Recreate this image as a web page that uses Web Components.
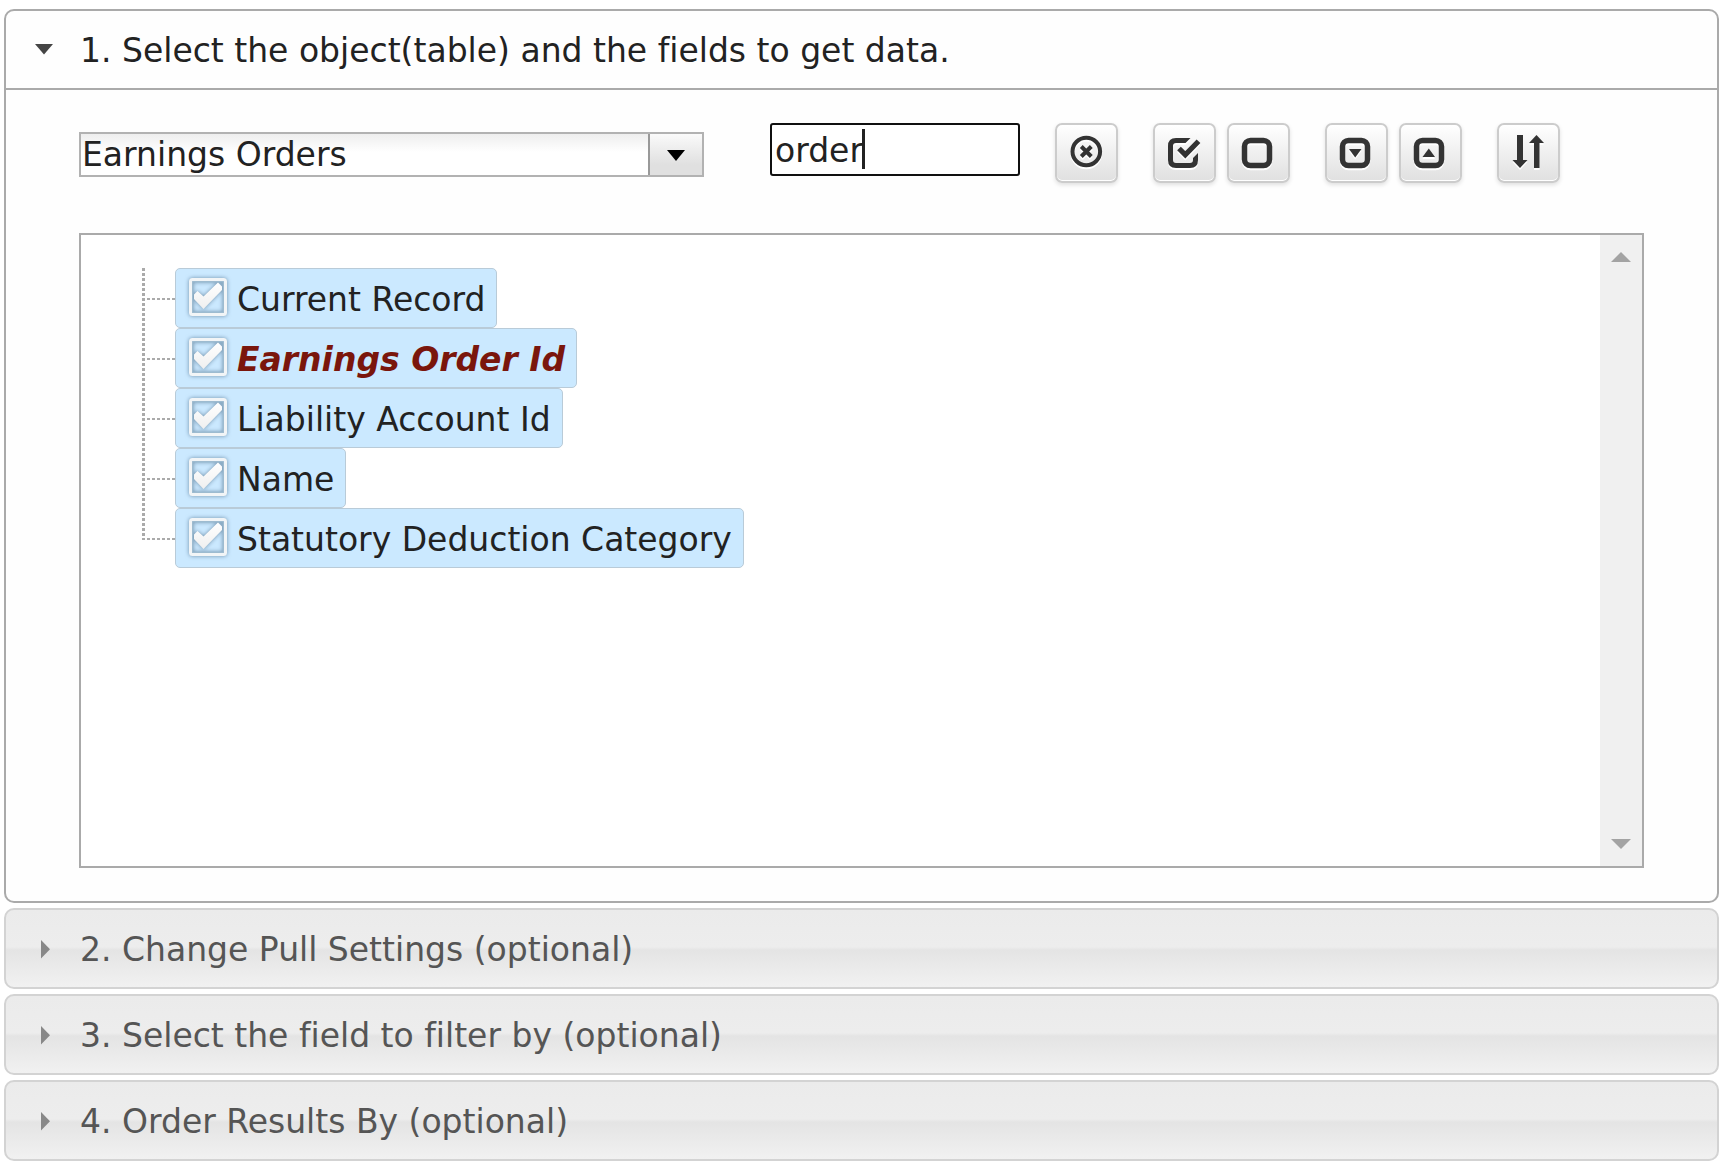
<!DOCTYPE html>
<html lang="en">
<head>
<meta charset="utf-8">
<title>Pull data</title>
<style>
  body {
    margin: 0;
    padding: 9px 6px 4px 4px;
    background: #fff;
    color: #222;
    font: 33px/40px Verdana, "DejaVu Sans", sans-serif;
    font-variant-ligatures: none;
  }
</style>
</head>
<body>
<pull-wizard>
  <wizard-section open>
    <span slot="title">1. Select the object(table) and the fields to get data.</span>
    <tool-row>
      <object-picker></object-picker>
      <field-search></field-search>
      <button-group>
        <icon-button icon="clear" label="Clear search"></icon-button>
      </button-group>
      <button-group>
        <icon-button icon="check" label="Select all"></icon-button>
        <icon-button icon="uncheck" label="Select none"></icon-button>
      </button-group>
      <button-group>
        <icon-button icon="expand" label="Expand all"></icon-button>
        <icon-button icon="collapse" label="Collapse all"></icon-button>
      </button-group>
      <button-group>
        <icon-button icon="sort" label="Sort"></icon-button>
      </button-group>
    </tool-row>
    <field-tree>
      <field-item>Current Record</field-item>
      <field-item key-field>Earnings Order Id</field-item>
      <field-item>Liability Account Id</field-item>
      <field-item>Name</field-item>
      <field-item>Statutory Deduction Category</field-item>
    </field-tree>
  </wizard-section>
  <wizard-section><span slot="title">2. Change Pull Settings (optional)</span></wizard-section>
  <wizard-section><span slot="title">3. Select the field to filter by (optional)</span></wizard-section>
  <wizard-section><span slot="title">4. Order Results By (optional)</span></wizard-section>
</pull-wizard>

<script>
const RESET = `<style>
  *, :host { box-sizing: border-box; }
  button, input, select { margin: 0; font: inherit; color: inherit; }
  svg { display: block; }
</style>`;

class BaseElement extends HTMLElement {
  connectedCallback() {
    if (this.shadowRoot) return;
    this.attachShadow({ mode: "open" }).innerHTML = RESET + this.render();
    this.ready();
  }
  ready() {}
}

customElements.define("pull-wizard", class extends BaseElement {
  render() {
    return `<style>:host { display: flex; flex-direction: column; gap: 5px; }</style><slot></slot>`;
  }
});

customElements.define("wizard-section", class extends BaseElement {
  render() {
    return `<style>
      :host { display: block; }
      .head {
        display: flex; align-items: center; gap: 25px;
        width: 100%; height: 81px; padding: 2px 27px 0;
        border: 2px solid #d3d3d3; border-radius: 10px;
        background: linear-gradient(#ebebeb 0, #ededed 48%, #e4e4e4 52%, #f1f1f1 100%);
        color: #555; text-align: left; font-variant-ligatures: none;
      }
      .head svg { width: 22px; height: 22px; flex: none; fill: #888; }
      .body { display: none; }
      :host([open]) .head {
        border-color: #aaa; border-radius: 10px 10px 0 0;
        background: #fefefe; color: #222;
      }
      :host([open]) .head svg { fill: #454545; }
      :host([open]) .right, :host(:not([open])) .down { display: none; }
      :host([open]) .body {
        display: flex; flex-direction: column; gap: 50px;
        padding: 33px 73px;
        border: 2px solid #aaa; border-top: 0; border-radius: 0 0 10px 10px;
        background: #fefefe;
      }
    </style>
    <button class="head" type="button" aria-expanded="${this.hasAttribute("open")}">
      <svg viewBox="0 0 22 22" aria-hidden="true">
        <path class="down" d="M2 4H20L11 14.500Z"/>
        <path class="right" d="M8 1V19.500L17 10.200Z"/>
      </svg>
      <slot name="title"></slot>
    </button>
    <div class="body"><slot></slot></div>`;
  }
  ready() {
    const head = this.shadowRoot.querySelector(".head");
    head.addEventListener("click", () => {
      this.toggleAttribute("open");
      head.setAttribute("aria-expanded", this.hasAttribute("open"));
    });
  }
});

customElements.define("tool-row", class extends BaseElement {
  render() {
    return `<style>:host { display: flex; align-items: flex-start; gap: 35px; }</style><slot></slot>`;
  }
});

customElements.define("object-picker", class extends BaseElement {
  render() {
    return `<style>
      :host { display: block; flex: 0 1 625px; margin: 9px 31px 0 0; }
      .box {
        display: grid; grid-template-columns: 1fr 54px;
        height: 45px; border: 2px solid #b2b2b2;
        background: linear-gradient(#eee, #fff 18px);
      }
      select {
        grid-area: 1 / 1 / 2 / 3; appearance: none; width: 100%;
        padding: 1px 56px 0 1px; border: 0; outline: 0; background: transparent;
      }
      .arrow {
        grid-area: 1 / 2; display: grid; place-items: center; pointer-events: none;
        border-left: 2px solid #999; background: linear-gradient(#fafafa, #e0e0e0 75%);
      }
    </style>
    <div class="box">
      <span class="arrow"><svg width="18" height="12" viewBox="0 0 18 12"><path d="M0 1H18L9 12Z"/></svg></span>
      <select aria-label="Object"><option>Earnings Orders</option></select>
    </div>`;
  }
});

customElements.define("field-search", class extends BaseElement {
  render() {
    return `<style>
      :host { display: block; position: relative; flex: 0 1 250px; }
      input {
        display: block; width: 100%; height: 53px; padding: 1px 3px 0;
        border: 2px solid #101010; border-radius: 3px; outline: 0; background: #fff;
        caret-color: transparent;
      }
      .caret { position: absolute; left: 92px; top: 6px; width: 3px; height: 40px; background: #222; }
    </style>
    <input type="text" value="order" aria-label="Find a field"><span class="caret"></span>`;
  }
});

customElements.define("button-group", class extends BaseElement {
  render() {
    return `<style>:host { display: flex; gap: 11px; }</style><slot></slot>`;
  }
});

const BOX = `<rect x="17.500" y="17.500" width="25" height="25" rx="6" fill="none" stroke="#333" stroke-width="5.500"/>`;
const ICONS = {
  clear: `<circle cx="31.300" cy="28.500" r="13.800" fill="none" stroke="#333" stroke-width="4"/>
    <path d="M26.300 23.500L36.300 33.500M36.300 23.500L26.300 33.500" stroke="#333" stroke-width="4"/>`,
  check: `<path d="M37.500 15H23Q15 15 15 23V37Q15 45 23 45H37Q45 45 45 37V30L40 35V37Q40 40 37 40H23Q20 40 20 37V23Q20 20 23 20H32.500Z" fill="#333"/>
    <path d="M26 25.500L32.300 31.800L45.500 18.200" fill="none" stroke="#333" stroke-width="5.200"/>`,
  uncheck: BOX,
  expand: BOX + `<path d="M24 26H36.500L30.200 34.500Z" fill="#333"/>`,
  collapse: BOX + `<path d="M23.500 34H36L29.800 25.500Z" fill="#333"/>`,
  sort: `<path d="M20 12H26V37H30.500L23 45L15.500 37H20ZM37 45V20H32L39.500 12L47 20H42.500V45Z" fill="#333"/>`
};

customElements.define("icon-button", class extends BaseElement {
  render() {
    return `<style>
      :host { display: block; }
      button {
        display: block; width: 63px; height: 60px; padding: 0; overflow: hidden;
        border: 2px solid #ccc; border-radius: 7px;
        background: linear-gradient(#fff, #e0e0e0);
        box-shadow: inset 0 -1px 0 #fff, 0 2px 4px rgba(0,0,0,.12);
      }
      svg { margin: -2px; filter: drop-shadow(0 2px 0 #fff); }
    </style>
    <button type="button" aria-label="${this.getAttribute("label")}">
      <svg width="63" height="60" viewBox="0 0 63 60">${ICONS[this.getAttribute("icon")]}</svg>
    </button>`;
  }
});

customElements.define("field-tree", class extends BaseElement {
  render() {
    return `<style>
      :host { display: flex; border: 2px solid #aaa; background: #fff; min-height: 635px; }
      .items { flex: 1; padding: 33px 0 0 60px; }
    </style>
    <div class="items"><slot></slot></div>
    <scroll-rail></scroll-rail>`;
  }
});

customElements.define("scroll-rail", class extends BaseElement {
  render() {
    return `<style>
      :host { display: flex; flex-direction: column; justify-content: space-between; width: 42px; background: #f0f0f0; }
      button { display: grid; place-items: center; height: 44px; padding: 0; border: 0; background: none; }
    </style>
    <button type="button" aria-label="Scroll up"><svg width="20" height="10" viewBox="0 0 20 10"><path d="M0 10L10 0L20 10Z" fill="#a3a3a3"/></svg></button>
    <button type="button" aria-label="Scroll down"><svg width="20" height="10" viewBox="0 0 20 10"><path d="M0 0H20L10 10Z" fill="#a3a3a3"/></svg></button>`;
  }
});

customElements.define("field-item", class extends BaseElement {
  render() {
    return `<style>
      :host { display: flex; height: 60px; }
      .branch { flex: none; }
      .stem { stroke: #aaa; stroke-width: 3; stroke-dasharray: 3 2; }
      .end { display: none; }
      :host(:last-child) .through { display: none; }
      :host(:last-child) .end { display: block; }
      label {
        display: flex; align-items: center; gap: 6px; padding: 4px 11px 0 9px;
        border: 1px solid #b9cbd8; border-radius: 5px; background: #cbe9ff;
        white-space: nowrap;
      }
      :host([key-field]) label { color: #7a160c; font-weight: bold; font-style: italic; }
      .tick { display: grid; padding-bottom: 6px; }
      .tick > * { grid-area: 1 / 1; width: 46px; height: 46px; }
      input { appearance: none; }
      svg { pointer-events: none; }
      input:not(:checked) + svg .mark { display: none; }
      .tick svg { filter: drop-shadow(0 0 2px rgba(50,85,115,.6)); }
    </style>
    <svg class="branch" width="34" height="60" viewBox="0 0 34 60" aria-hidden="true">
      <path class="stem through" d="M2.500 0V60"/>
      <path class="stem end" d="M2.500 0V32"/>
      <path d="M6 31H34" stroke="#aaa" stroke-width="2" stroke-dasharray="3 2"/>
    </svg>
    <label>
      <span class="tick">
        <input type="checkbox" checked>
        <svg viewBox="0 0 46 46" aria-hidden="true">
          <defs><linearGradient id="g" x1="0" y1="0" x2="0" y2="1"><stop offset="0" stop-color="#fff"/><stop offset="1" stop-color="#efefef"/></linearGradient></defs>
          <rect x="7.500" y="7.500" width="31" height="31" fill="none" stroke="#9dbbd0" stroke-width="1.500"/>
          <rect x="5.500" y="5.500" width="35" height="35" rx="2" fill="none" stroke="#f2f5f7" stroke-width="3"/>
          <path class="mark" d="M9 20.500L12.500 17L18.500 22.500L33 8.500L37 12.500V16L18.500 35L9 25Z" fill="url(#g)"/>
        </svg>
      </span>
      <slot></slot>
    </label>`;
  }
});
</script>
</body>
</html>
